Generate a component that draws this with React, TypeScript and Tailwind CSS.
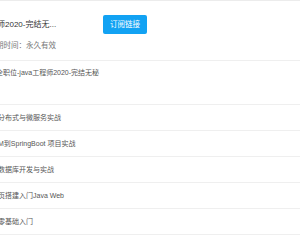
const courses = [
  { title: '分布式与微服务实战', shift: '-ml-[2px]' },
  { title: 'M到SpringBoot 项目实战', shift: '-ml-[2px]' },
  { title: '数据库开发与实战', shift: '-ml-[2px]' },
  { title: '页搭建入门Java Web', shift: '-ml-[2px]' },
  { title: '零基础入门', shift: '-ml-[2px]' },
];

export default function App() {
  return (
    <div className="w-[300px] h-[240px] overflow-hidden bg-white font-['Liberation_Sans','Noto_Sans_CJK_SC',sans-serif]">
      <div className="border-t border-[#ececec]">
        <div className="flex h-[60px] border-b border-[#efefef]">
          <div className="w-[103px] overflow-hidden">
            <p className="-ml-[3px] mt-[19px] text-[8px] leading-[10px] text-[#333] whitespace-nowrap">
              师2020-完结无...
            </p>
            <p className="-ml-[4px] mt-[11px] text-[7.5px] leading-[9px] text-[#777] whitespace-nowrap">
              期时间：永久有效
            </p>
          </div>
          <button className="mt-[14px] h-[19px] w-[44px] rounded-[2px] bg-[#12a2f3] text-[7.5px] leading-[19px] text-white">
            订阅链接
          </button>
        </div>

        <div className="h-[44px] overflow-hidden border-b border-[#efefef] pt-[7px]">
          <p className="-ml-[4px] text-[7px] leading-[9px] text-[#555] whitespace-nowrap">
            全职位-java工程师2020-完结无秘
          </p>
        </div>

        {courses.map((course) => (
          <div
            key={course.title}
            className="flex h-[26px] items-center overflow-hidden border-b border-[#efefef]"
          >
            <p className={`${course.shift} text-[7px] leading-[9px] text-[#555] whitespace-nowrap`}>
              {course.title}
            </p>
          </div>
        ))}
      </div>
    </div>
  );
}
